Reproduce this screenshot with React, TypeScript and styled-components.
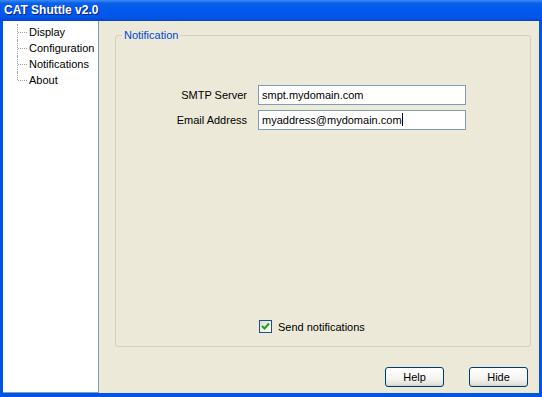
import styled, { createGlobalStyle } from 'styled-components';

const GlobalStyle = createGlobalStyle`
  html, body {
    margin: 0;
    padding: 0;
    background: #ece9d8;
  }

  * {
    box-sizing: border-box;
  }
`;

const Window = styled.div`
  display: flex;
  flex-direction: column;
  width: 542px;
  height: 397px;

  font-family: 'Liberation Sans', Arial, sans-serif;
  font-size: 11px;
  color: #000;

  background: #0054e3;
`;

const TitleBar = styled.div`
  display: flex;
  align-items: center;
  height: 21px;
  padding: 0 0 1px 4px;

  font-family: 'Liberation Sans', Arial, sans-serif;
  font-size: 12px;
  font-weight: bold;
  color: #fff;
  text-shadow: 1px 1px #0a1e8c;

  background: linear-gradient(#3c8cfb 0%, #0a5fe8 15%, #0058ee 50%, #0454e6 85%, #0046d0 100%);
`;

const Frame = styled.div`
  flex: 1;
  display: flex;
  margin: 0 3px 4px 3px;
  min-height: 0;

  background: #ece9d8;
`;

const TreePanel = styled.ul`
  width: 96px;
  margin: 0;
  padding: 3px 0 0 14px;

  list-style: none;

  background: #fff;
  border-right: 1px solid #7f9db9;
  border-bottom: 1px solid #7f9db9;
`;

const TreeItem = styled.li<{ last?: boolean }>`
  position: relative;
  height: 16px;
  padding-left: 12px;

  line-height: 16px;
  white-space: nowrap;

  &::before {
    content: '';
    position: absolute;
    left: 0;
    top: 0;
    height: ${(p) => (p.last ? '8px' : '16px')};
    border-left: 1px dotted #a0a0a0;
  }

  &::after {
    content: '';
    position: absolute;
    left: 1px;
    top: 8px;
    width: 9px;
    border-top: 1px dotted #a0a0a0;
  }
`;

const Content = styled.div`
  flex: 1;
  display: flex;
  flex-direction: column;
  padding: 8px 8px 6px 16px;
`;

const GroupBox = styled.fieldset`
  flex: 1;
  display: flex;
  flex-direction: column;
  margin: 0;
  padding: 0;

  border: 1px solid #d0d0bf;
  border-radius: 3px;
`;

const GroupLegend = styled.legend`
  margin-left: 6px;
  padding: 0 2px;

  color: #0046d5;
  font-size: 11px;
`;

const FormGrid = styled.div`
  display: grid;
  grid-template-columns: 131px 208px;
  column-gap: 11px;
  row-gap: 5px;
  align-items: center;
  margin-top: 44px;
`;

const FieldLabel = styled.label`
  text-align: right;
`;

const TextInput = styled.div`
  height: 20px;
  padding: 0 3px;

  line-height: 18px;
  white-space: nowrap;

  background: #fff;
  border: 1px solid #7f9db9;
`;

const Caret = styled.span`
  display: inline-block;
  width: 1px;
  height: 13px;
  vertical-align: -2px;
  background: #000;
`;

const CheckRow = styled.div`
  display: flex;
  align-items: center;
  gap: 6px;
  margin: auto 0 13px 143px;
`;

const CheckBox = styled.span`
  display: flex;
  align-items: center;
  justify-content: center;
  width: 13px;
  height: 13px;

  background: linear-gradient(135deg, #dcdcd7, #fff);
  border: 1px solid #1c5180;
`;

const ButtonRow = styled.div`
  display: flex;
  justify-content: flex-end;
  gap: 25px;
  margin-top: 20px;
  padding-right: 3px;
`;

const Button = styled.button`
  width: 59px;
  height: 20px;
  padding: 0;

  font-family: inherit;
  font-size: 11px;
  color: #000;

  background: linear-gradient(#fff 0%, #f4f4f0 60%, #e3e3db 90%, #d6d0c5 100%);
  border: 1px solid #003c74;
  border-radius: 3px;
`;

export default function App() {
  return (
    <>
      <GlobalStyle />
      <Window>
        <TitleBar>CAT Shuttle v2.0</TitleBar>
        <Frame>
          <TreePanel>
            <TreeItem>Display</TreeItem>
            <TreeItem>Configuration</TreeItem>
            <TreeItem>Notifications</TreeItem>
            <TreeItem last>About</TreeItem>
          </TreePanel>
          <Content>
            <GroupBox>
              <GroupLegend>Notification</GroupLegend>
              <FormGrid>
                <FieldLabel>SMTP Server</FieldLabel>
                <TextInput>smpt.mydomain.com</TextInput>
                <FieldLabel>Email Address</FieldLabel>
                <TextInput>
                  myaddress@mydomain.com
                  <Caret />
                </TextInput>
              </FormGrid>
              <CheckRow>
                <CheckBox>
                  <svg width="9" height="9" viewBox="0 0 9 9">
                    <path d="M1 4 L3.5 6.5 L8 1.5" fill="none" stroke="#21a121" strokeWidth="2" />
                  </svg>
                </CheckBox>
                <span>Send notifications</span>
              </CheckRow>
            </GroupBox>
            <ButtonRow>
              <Button>Help</Button>
              <Button>Hide</Button>
            </ButtonRow>
          </Content>
        </Frame>
      </Window>
    </>
  );
}
